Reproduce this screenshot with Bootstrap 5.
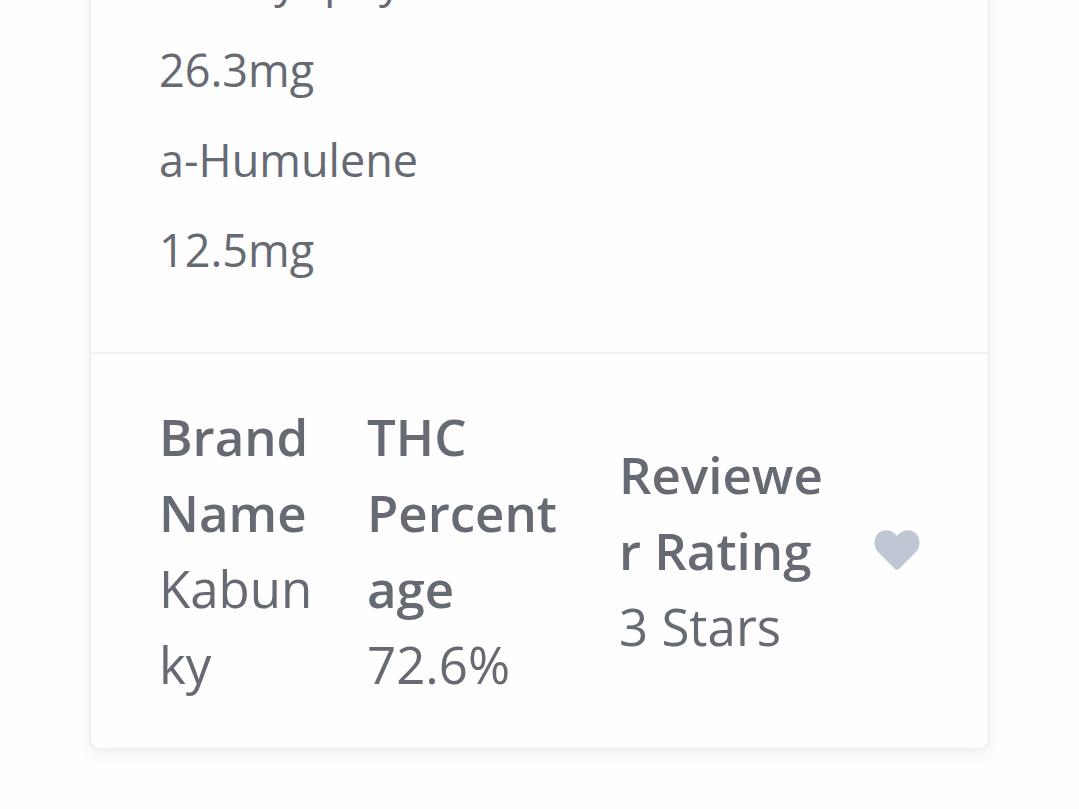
<!DOCTYPE html>
<html lang="en">
<head>
<meta charset="utf-8">
<meta name="viewport" content="width=device-width, initial-scale=1">
<title>Kabunky</title>
<link href="https://cdn.jsdelivr.net/npm/bootstrap@5.3.0/dist/css/bootstrap.min.css" rel="stylesheet">
<style>
  body { font-family: "Open Sans", sans-serif; color: #666a73; background: #fefefe; overflow-x: hidden; }
  .page-gutter { padding: 0 91px 60px; }
  .product { --bs-card-border-width: 0; --bs-card-border-radius: 8px; --bs-card-bg: #fefefe; color: inherit;
    margin-top: -65px; box-shadow: 0 0 0 2px #eef0f3, 0 5px 14px 1px rgba(150, 165, 180, .14); }
  .terpenes { padding: 0 68px 57px; font-size: 45px; line-height: 90px; }
  .facts { padding: 44px 68px 46px; font-size: 51px; line-height: 76px; background: none;
    border-top: 2px solid #eff1f3; }
  .fact-grid { grid-template-columns: minmax(0, 158fr) minmax(0, 202fr) minmax(0, 205fr) 46px; column-gap: 50px; }
  .fact-grid dt, .fact-grid dd { overflow-wrap: anywhere; }
  .like { color: #bfc7d5; line-height: 1; }
</style>
</head>
<body>
<main class="page-gutter">
  <article class="card product">
    <div class="card-body terpenes">
      <ul class="list-unstyled mb-0">
        <li>B-Caryophyllene</li>
        <li>26.3mg</li>
        <li>a-Humulene</li>
        <li>12.5mg</li>
      </ul>
    </div>
    <div class="card-footer facts">
      <div class="d-grid align-items-center fact-grid">
        <dl class="mb-0"><dt class="fw-semibold">Brand Name</dt><dd class="mb-0">Kabunky</dd></dl>
        <dl class="mb-0"><dt class="fw-semibold">THC Percentage</dt><dd class="mb-0">72.6%</dd></dl>
        <dl class="mb-0"><dt class="fw-semibold">Reviewer Rating</dt><dd class="mb-0">3 Stars</dd></dl>
        <button type="button" class="btn border-0 p-0 like" aria-label="Like">
          <svg class="d-block mx-auto" width="46" height="40" viewBox="0 0 46 40" fill="currentColor" aria-hidden="true"><path d="M23 6C18-1 9-1.500 4 3.500C-.7 8.500-.5 17 4 22L20.500 38.500Q23 41 25.500 38.500L42 22C46.500 17 46.700 8.500 42 3.500C37-1.500 28-1 23 6Z"/></svg>
        </button>
      </div>
    </div>
  </article>
</main>
<script src="https://cdn.jsdelivr.net/npm/bootstrap@5.3.0/dist/js/bootstrap.bundle.min.js"></script>
</body>
</html>
